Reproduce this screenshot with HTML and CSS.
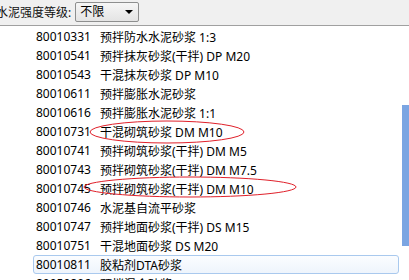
FILE: index.html
```html
<!DOCTYPE html>
<html lang="zh">
<head>
<meta charset="utf-8">
<link rel="stylesheet" href="styles.css">
</head>
<body>
<div class="toolbar">
  <span class="label">水泥强度等级:</span>
  <div class="select"><span class="select-text">不限</span><span class="arrow"></span></div>
</div>
<div class="main">
  <ul class="list">
    <li class="row"><span class="code">80010331</span><span class="name">预拌防水水泥砂浆 1:3</span></li>
    <li class="row"><span class="code">80010541</span><span class="name">预拌抹灰砂浆(干拌) DP M20</span></li>
    <li class="row"><span class="code">80010543</span><span class="name">干混抹灰砂浆 DP M10</span></li>
    <li class="row"><span class="code">80010611</span><span class="name">预拌膨胀水泥砂浆</span></li>
    <li class="row"><span class="code">80010616</span><span class="name">预拌膨胀水泥砂浆 1:1</span></li>
    <li class="row"><span class="code">80010731</span><span class="name">干混砌筑砂浆 DM M10</span></li>
    <li class="row"><span class="code">80010741</span><span class="name">预拌砌筑砂浆(干拌) DM M5</span></li>
    <li class="row"><span class="code">80010743</span><span class="name">预拌砌筑砂浆(干拌) DM M7.5</span></li>
    <li class="row"><span class="code">80010745</span><span class="name">预拌砌筑砂浆(干拌) DM M10</span></li>
    <li class="row"><span class="code">80010746</span><span class="name">水泥基自流平砂浆</span></li>
    <li class="row"><span class="code">80010747</span><span class="name">预拌地面砂浆(干拌) DS M15</span></li>
    <li class="row"><span class="code">80010751</span><span class="name">干混地面砂浆 DS M20</span></li>
    <li class="row selected"><span class="code">80010811</span><span class="name">胶粘剂DTA砂浆</span></li>
    <li class="row"><span class="code">80050806</span><span class="name">预拌混合砂浆 M5.0</span></li>
  </ul>
  <div class="track"><div class="thumb"></div></div>
</div>
<svg class="marks" width="409" height="280" viewBox="0 0 409 280">
  <ellipse cx="167" cy="132" rx="77" ry="11" />
  <ellipse cx="190" cy="187" rx="106" ry="10" />
</svg>
</body>
</html>
```
FILE: styles.css
```css
html, body {
  margin: 0;
  padding: 0;
  width: 409px;
  height: 280px;
  overflow: hidden;
  background: #fff;
  font-family: "Noto Sans", "Noto Sans CJK SC", sans-serif;
  font-size: 12px;
  color: #000;
  position: relative;
}

.toolbar {
  height: 26px;
  box-sizing: border-box;
  background: #f0f0f0;
  border-bottom: 1px solid #a0a0a0;
  display: flex;
  align-items: center;
  gap: 4px;
}

.label {
  margin-left: -4px;
  line-height: 14px;
  color: #111;
}

.select {
  width: 64px;
  height: 20px;
  box-sizing: border-box;
  margin-top: -1px;
  border: 1px solid #8e8f8f;
  border-radius: 2px;
  background: linear-gradient(#f6f6f6, #e4e4e4);
  display: flex;
  align-items: center;
  justify-content: space-between;
  padding: 0 5px 0 4px;
}

.select-text {
  line-height: 14px;
}

.arrow {
  width: 0;
  height: 0;
  border-left: 4px solid transparent;
  border-right: 4px solid transparent;
  border-top: 4px solid #000;
}

.main {
  display: flex;
}

.list {
  list-style: none;
  margin: 0;
  padding: 1px 3px 0 33px;
  width: 402px;
  box-sizing: border-box;
}

.row {
  height: 19px;
  box-sizing: border-box;
  display: flex;
  align-items: center;
  gap: 9px;
  padding-left: 3px;
  border: 1px solid transparent;
  border-radius: 3px;
  white-space: nowrap;
}

.row.selected {
  border-color: #a9c9ee;
  background: linear-gradient(#fbfdff, #eef4fc);
}

.code {
  width: 55px;
  margin-left: -1px;
}

.track {
  width: 7px;
}

.thumb {
  margin-top: 79px;
  height: 141px;
  background: #7ba5e2;
}

.marks {
  position: absolute;
  left: 0;
  top: 0;
  pointer-events: none;
}

.marks ellipse {
  fill: none;
  stroke: #e0202a;
  stroke-width: 1;
}
```
